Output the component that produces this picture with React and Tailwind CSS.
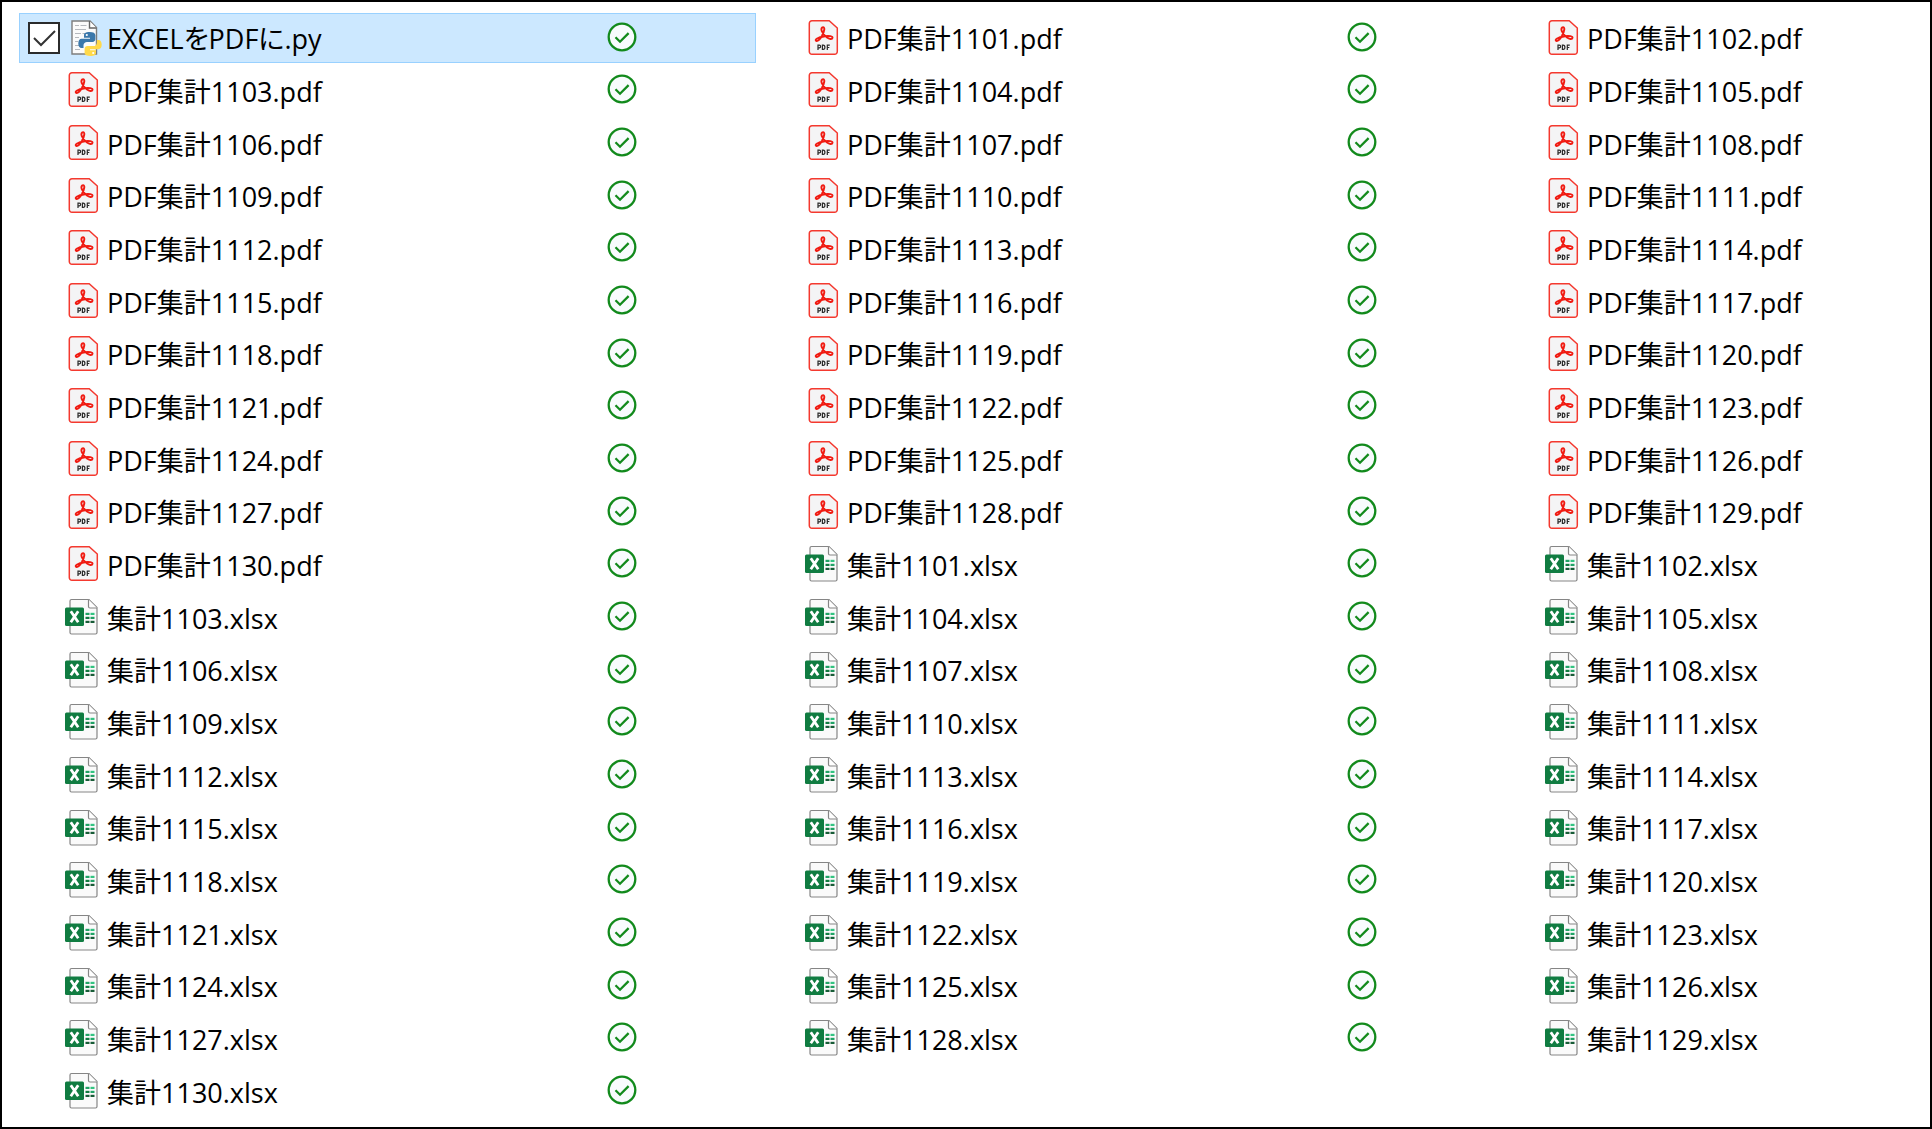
// File listing with three columns, sync status and a selected row.

import { useState } from 'react';

const COLUMNS = 3;
const NUMBERS = Array.from({ length: 30 }, (_, i) => 1101 + i);

const FILES = [
  { name: 'EXCELをPDFに.py', type: 'py' },
  ...NUMBERS.map((n) => ({ name: `PDF集計${n}.pdf`, type: 'pdf' })),
  ...NUMBERS.map((n) => ({ name: `集計${n}.xlsx`, type: 'xlsx' })),
];

function PdfIcon() {
  return (
    <svg aria-hidden viewBox="0 0 38 38" className="h-[38px] w-[38px] flex-none">
      <path
        d="M7 1.7h17.2L32.3 9v23.5a2.7 2.7 0 0 1-2.7 2.8H7a2.7 2.7 0 0 1-2.7-2.8v-28A2.7 2.7 0 0 1 7 1.7z"
        fill="#f4f4f5"
        stroke="#f4392f"
        strokeWidth="1.5"
      />
      <path
        d="M18 8.3c-1.500 0-2 1.700-1.300 3.600 1 2.600 3 5 5.300 6.700 2 1.500 5.200 2 5.500.3.300-1.700-3.600-2.300-7.500-1.700-3.300.5-6.400 1.300-8.300 2.500-1.400.9-1.300 2.200-.2 2.300 1.800.2 3.900-2.300 5.500-5.200 1.200-2.300 2-4.400 2.300-6.300.2-1.400-.3-2.200-1.300-2.200z"
        fill="none"
        stroke="#f01b12"
        strokeWidth="1.900"
        strokeLinejoin="round"
      />
      <g fill="none" stroke="#2a2a2a" strokeWidth="1.200">
        <path d="M13 31v-4.900h1.300a1.300 1.300 0 0 1 0 2.700H13" />
        <path d="M17.400 26.100v4.300h.8c1.300 0 1.700-.8 1.700-2.150s-.4-2.150-1.700-2.150z" />
        <path d="M22.300 31v-4.900h2.500M22.300 28.500h2" />
      </g>
    </svg>
  );
}

function ExcelIcon() {
  return (
    <svg aria-hidden viewBox="0 0 38 38" className="h-[38px] w-[38px] flex-none">
      <path
        d="M6.500 1.500h17.500l8 8v25a1.500 1.500 0 0 1-1.500 1.500h-24a1.500 1.500 0 0 1-1.500-1.500v-31.500a1.500 1.500 0 0 1 1.500-1.500z"
        fill="#fafafa"
        stroke="#858585"
        strokeWidth="1.200"
      />
      <path d="M23.500 1.500v7a1.500 1.500 0 0 0 1.500 1.500h7" fill="#fff" stroke="#858585" strokeWidth="1.200" />
      <rect x="20.500" y="14.800" width="4" height="2.200" fill="#21a366" />
      <rect x="25.500" y="14.800" width="4" height="2.200" fill="#33c481" />
      <rect x="20.500" y="18.800" width="4" height="2.200" fill="#107c41" />
      <rect x="25.500" y="18.800" width="4" height="2.200" fill="#21a366" />
      <rect x="20.500" y="22.800" width="4" height="2.200" fill="#185c37" />
      <rect x="25.500" y="22.800" width="4" height="2.200" fill="#185c37" />
      <rect x="0" y="9.500" width="19" height="18.500" rx="1.500" fill="#107c41" />
      <path d="M5.800 13.300l7.400 10.900M13.200 13.300L5.800 24.200" stroke="#fff" strokeWidth="2.800" />
    </svg>
  );
}

function PythonIcon() {
  return (
    <svg aria-hidden viewBox="0 0 38 38" className="h-[38px] w-[38px] flex-none">
      <path d="M7 2h18l6.500 6.500V35H7z" fill="#fbfbfb" stroke="#7d7d7d" strokeWidth="1.400" />
      <path d="M24.500 2v7h7" fill="#fff" stroke="#666" strokeWidth="1.400" />
      <path
        d="M10 6.500h4M15.500 6.500h6M10 10.500h11M10 14.500h6M17.500 14.500h5M10 18.500h4M10 22.500h3M10 26.500h4M10 30.500h5"
        stroke="#b5b8bd"
        strokeWidth="1.200"
      />
      <path
        d="M24.500 13c-4 0-5.500 1.300-5.500 3.300v2.400h6v1h-8.300c-2.200 0-3.400 1.900-3.400 4.700s1.200 4.600 3.200 4.600h2v-2.700c0-2 1.600-3.400 3.500-3.400h5.500c1.700 0 2.900-1.200 2.900-2.900v-3.700c0-2.100-2.100-3.300-5.900-3.300z"
        fill="#3b78ab"
      />
      <circle cx="21.800" cy="16" r="1.100" fill="#fff" />
      <path
        d="M25.500 37c4 0 5.500-1.300 5.500-3.300v-2.400h-6v-1h8.300c2.200 0 3.400-1.900 3.400-4.700s-1.200-4.600-3.200-4.600h-1.600v2.700c0 2-1.600 3.400-3.500 3.400h-5.900c-1.700 0-2.900 1.200-2.900 2.900v3.700c0 2.100 2.100 3.300 5.900 3.300z"
        fill="#ffd94a"
      />
      <circle cx="28.200" cy="34" r="1.100" fill="#fff" />
    </svg>
  );
}

const ICONS = { py: PythonIcon, pdf: PdfIcon, xlsx: ExcelIcon };

function SyncedIcon() {
  return (
    <svg role="img" aria-label="同期済み" viewBox="0 0 30 30" className="h-[30px] w-[30px]">
      <circle cx="15" cy="15" r="13.300" fill="#f8fbfd" stroke="#128a1c" strokeWidth="2.300" />
      <path d="M8.500 15.300l4.500 4.400 8.600-8.600" fill="none" stroke="#128a1c" strokeWidth="2.300" />
    </svg>
  );
}

function SelectBox({ label, checked, onChange }) {
  return (
    <span className="relative block h-8 w-8">
      <input
        type="checkbox"
        aria-label={label}
        checked={checked}
        onChange={onChange}
        className="block h-8 w-8 appearance-none border-2 border-[#2b2b2b] bg-white"
      />
      <svg aria-hidden viewBox="0 0 32 32" className="pointer-events-none absolute inset-0 h-8 w-8">
        <path d="M6 16l7 7L27 9" fill="none" stroke="#333" strokeWidth="2" />
      </svg>
    </span>
  );
}

function FileCell({ file, selected, showStatus, onToggle }) {
  const Icon = ICONS[file.type];
  return (
    <li
      className={`flex min-w-0 items-center border pl-2 ${
        selected ? 'border-[#99d1ff] bg-[#cce8ff]' : 'border-transparent'
      }`}
    >
      <div className="mr-[5px] w-8 flex-none">
        {selected && <SelectBox label={file.name} checked={selected} onChange={onToggle} />}
      </div>
      <Icon />
      <button
        type="button"
        onClick={onToggle}
        className="ml-1 min-w-0 flex-1 truncate pt-[3px] text-left text-[27px] leading-[36px] text-black"
      >
        {file.name}
      </button>
      {showStatus && (
        <div className="w-[148px] flex-none pb-[2px]">
          <SyncedIcon />
        </div>
      )}
    </li>
  );
}

export default function App() {
  const [selected, setSelected] = useState(FILES[0].name);

  return (
    <main className="flex min-h-screen flex-col border-2 border-black bg-white font-['Open_Sans','Noto_Sans_CJK_JP',sans-serif] [font-feature-settings:'palt']">
      <ul className="grid flex-1 auto-rows-fr grid-cols-[12fr_12fr_7fr] gap-[3px] py-[11px] pr-[1px] pl-[17px]">
        {FILES.map((file, i) => (
          <FileCell
            key={file.name}
            file={file}
            selected={file.name === selected}
            showStatus={i % COLUMNS !== COLUMNS - 1}
            onToggle={() => setSelected(file.name === selected ? null : file.name)}
          />
        ))}
      </ul>
    </main>
  );
}
